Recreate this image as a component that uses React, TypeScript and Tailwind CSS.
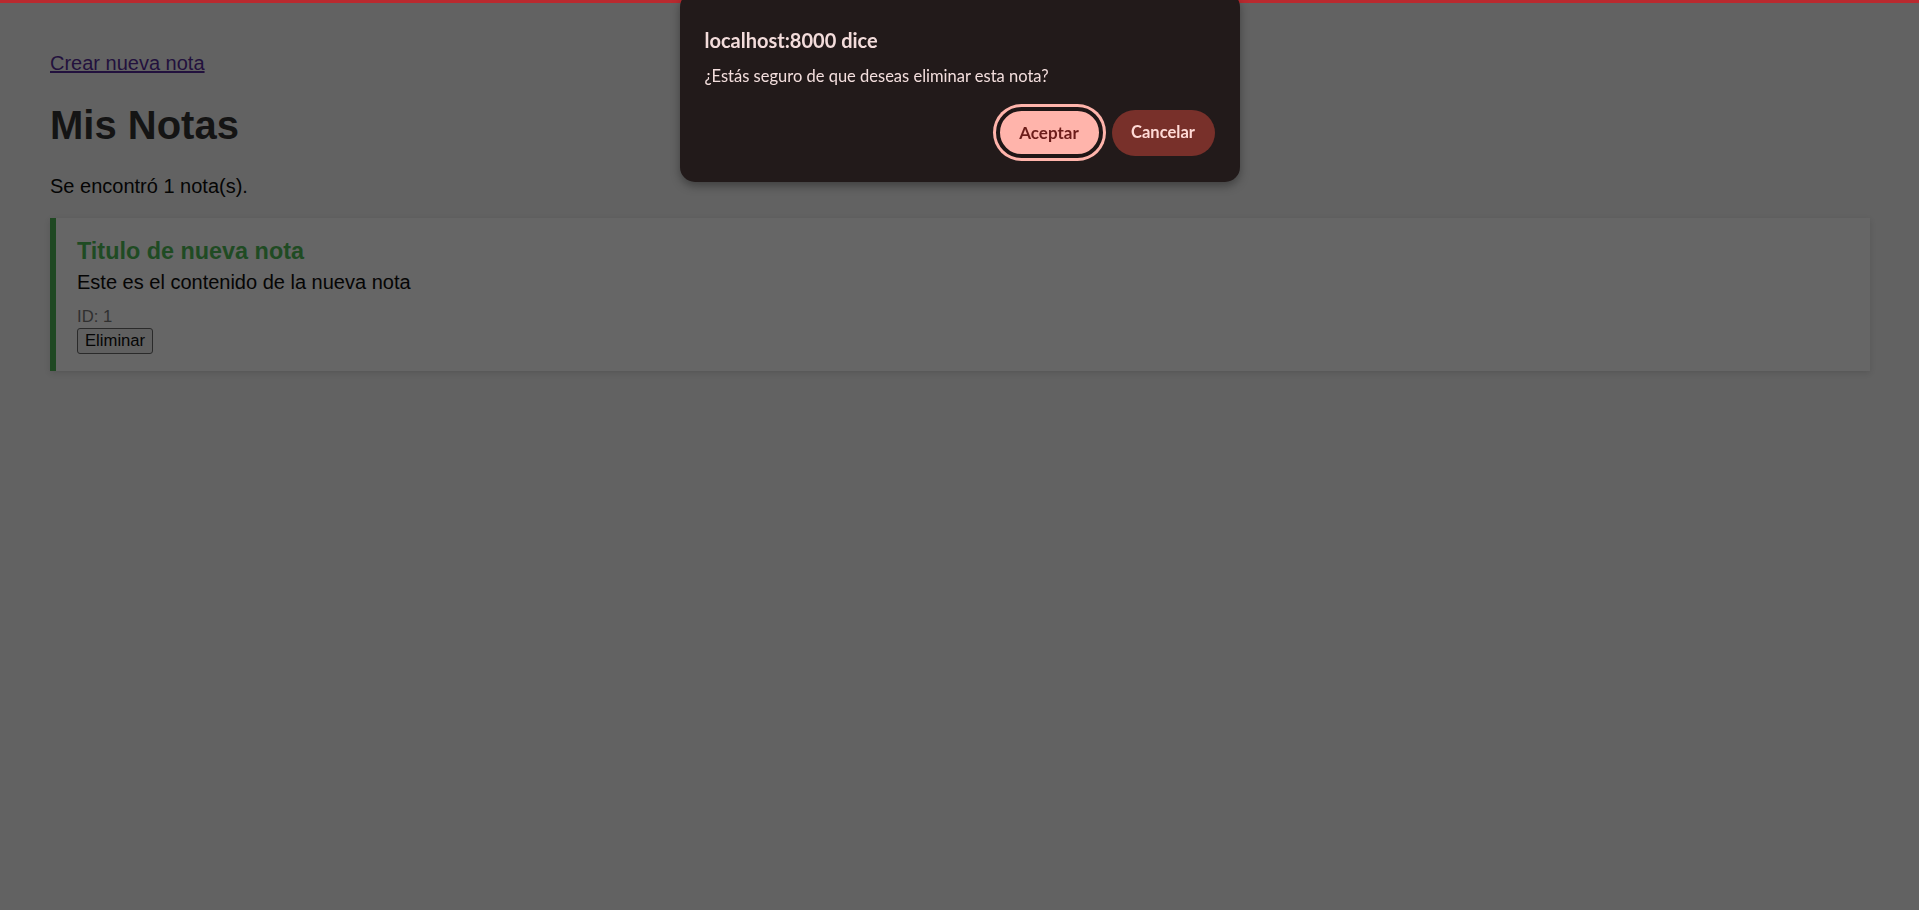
// Notas: listado con el diálogo de confirmación de borrado abierto.

const notas = [
  {
    id: 1,
    titulo: 'Titulo de nueva nota',
    contenido: 'Este es el contenido de la nueva nota',
  },
];

function NotaCard({ nota }: { nota: (typeof notas)[number] }) {
  return (
    <div className="border-l-[6px] border-[#1f4822] bg-[#666666] pt-[20px] pr-[20px] pb-[17px] pl-[21px] shadow-[0_2px_6px_rgba(0,0,0,0.12)]">
      <h3 className="mb-[6px] text-[23.4px] leading-[27px] font-bold text-[#1f4b23]">
        {nota.titulo}
      </h3>
      <p className="mb-[10px] text-[20px] leading-[23px] text-[#050505]">
        {nota.contenido}
      </p>
      <div className="text-[20px] leading-[23px]">
        <small className="text-[16.67px] text-[#303030]">ID: {nota.id}</small>
      </div>
      <button
        type="button"
        className="h-[26px] rounded-[3px] border border-[#2a2a2a] bg-[#606060] px-[7px] text-[16.67px] leading-none text-[#050505]"
      >
        Eliminar
      </button>
    </div>
  );
}

function ConfirmDialog() {
  return (
    <div
      role="dialog"
      className="fixed top-[-8px] left-1/2 z-20 w-[560px] -translate-x-1/2 rounded-[15px] bg-[#221a1a] px-[25px] pt-[36px] pb-[24px] shadow-[0_4px_10px_rgba(0,0,0,0.35)]"
      style={{ fontFamily: 'Lato, "Noto Sans", sans-serif' }}
    >
      <h2 className="text-[20px] leading-[24px] font-bold text-[#f3dcdb]">
        localhost:8000 dice
      </h2>
      <p className="mt-[14px] text-[16.5px] leading-[21px] text-[#f3dedd]">
        ¿Estás seguro de que deseas eliminar esta nota?
      </p>
      <div className="mt-[20px] flex items-center justify-end gap-[9px]">
        <button
          type="button"
          className="h-[51px] w-[107px] rounded-full border-4 border-[#1f1616] bg-[#ffb4ab] text-[17px] font-bold text-[#6c1d1a] shadow-[0_0_0_3px_#ffb4ab]"
        >
          Aceptar
        </button>
        <button
          type="button"
          className="h-[46px] w-[103px] rounded-full bg-[#78302a] text-[16.5px] font-bold text-[#ffdad6]"
        >
          Cancelar
        </button>
      </div>
    </div>
  );
}

export default function App() {
  return (
    <div
      className="relative min-h-screen bg-[#626262] pt-[52px] pr-[49px] pl-[50px]"
      style={{ fontFamily: '"Liberation Sans", Arial, sans-serif' }}
    >
      <div className="fixed top-0 left-0 z-10 h-[3px] w-full bg-[#b92a2f]" />

      <div className="text-[20px] leading-[23px]">
        <a href="#" className="text-[#22113d] underline">
          Crear nueva nota
        </a>
      </div>
      <h1 className="my-[27px] text-[40px] leading-[46px] font-bold text-[#141414]">
        Mis Notas
      </h1>
      <p className="mb-[20px] text-[20px] leading-[23px] text-[#050505]">
        Se encontró {notas.length} nota(s).
      </p>

      {notas.map((nota) => (
        <NotaCard key={nota.id} nota={nota} />
      ))}

      <ConfirmDialog />
    </div>
  );
}
